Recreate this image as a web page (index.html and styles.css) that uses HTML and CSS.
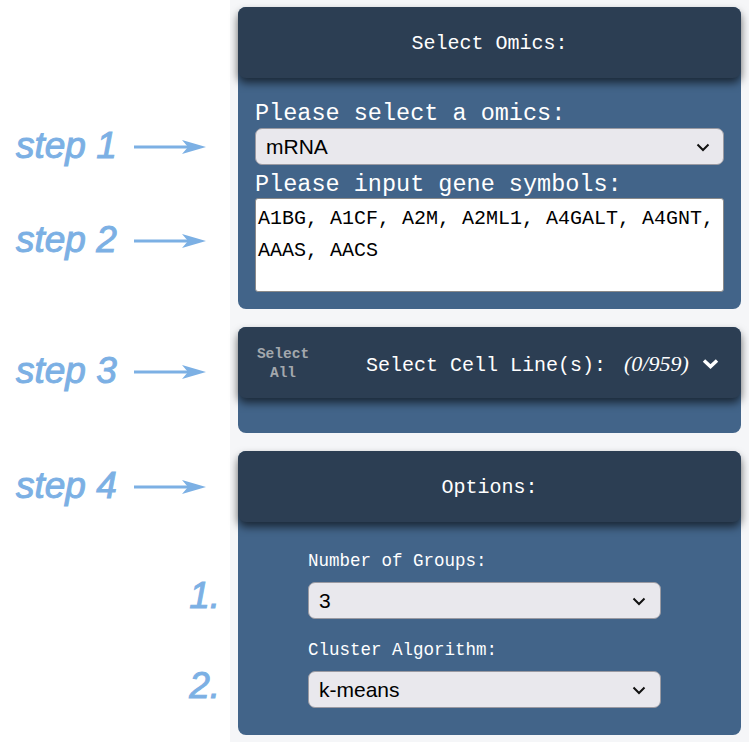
FILE: index.html
```html
<!DOCTYPE html>
<html lang="en">
<head>
    <title>Cluster - Steps</title>
    <meta charset="utf-8">
    <meta name="viewport" content="width=device-width, initial-scale=1.0">
    <link rel="stylesheet" href="styles.css">
</head>
<body>
    <div class="steps">
        <div class="step step-1">step 1<span class="arrow"><svg width="72" height="14" viewBox="0 0 72 14"><line x1="0" y1="7" x2="60" y2="7" stroke="#7cb0e4" stroke-width="3"/><path d="M48 0 L72 7 L48 14 L54 7 Z" fill="#7cb0e4"/></svg></span></div>
        <div class="step step-2">step 2<span class="arrow"><svg width="72" height="14" viewBox="0 0 72 14"><line x1="0" y1="7" x2="60" y2="7" stroke="#7cb0e4" stroke-width="3"/><path d="M48 0 L72 7 L48 14 L54 7 Z" fill="#7cb0e4"/></svg></span></div>
        <div class="step step-3">step 3<span class="arrow"><svg width="72" height="14" viewBox="0 0 72 14"><line x1="0" y1="7" x2="60" y2="7" stroke="#7cb0e4" stroke-width="3"/><path d="M48 0 L72 7 L48 14 L54 7 Z" fill="#7cb0e4"/></svg></span></div>
        <div class="step step-4">step 4<span class="arrow"><svg width="72" height="14" viewBox="0 0 72 14"><line x1="0" y1="7" x2="60" y2="7" stroke="#7cb0e4" stroke-width="3"/><path d="M48 0 L72 7 L48 14 L54 7 Z" fill="#7cb0e4"/></svg></span></div>
        <div class="step num num-1">1.</div>
        <div class="step num num-2">2.</div>
    </div>

    <div class="sidebar">
        <div class="panel">
            <div class="panel-head">Select Omics:</div>
            <div class="panel-body omics">
                <label class="field-label">Please select a omics:</label>
                <div class="select">
                    <span>mRNA</span>
                    <svg width="14" height="9" viewBox="0 0 14 9"><path d="M1.5 1.5 L7 7 L12.5 1.5" fill="none" stroke="#111" stroke-width="2"/></svg>
                </div>
                <label class="field-label">Please input gene symbols:</label>
                <textarea class="genes" spellcheck="false">A1BG, A1CF, A2M, A2ML1, A4GALT, A4GNT, AAAS, AACS</textarea>
            </div>
        </div>

        <div class="panel">
            <div class="panel-head cell-head">
                <div class="select-all">Select<br>All</div>
                <div class="cell-title">Select Cell Line(s): <em>(0/959)</em></div>
                <svg class="caret" width="17" height="11" viewBox="0 0 17 11"><path d="M2 2.5 L8.5 8.5 L15 2.5" fill="none" stroke="#fff" stroke-width="3.5"/></svg>
            </div>
            <div class="panel-body cells"></div>
        </div>

        <div class="panel">
            <div class="panel-head">Options:</div>
            <div class="panel-body options">
                <label class="opt-label">Number of Groups:</label>
                <div class="select small">
                    <span>3</span>
                    <svg width="14" height="9" viewBox="0 0 14 9"><path d="M1.5 1.5 L7 7 L12.5 1.5" fill="none" stroke="#111" stroke-width="2"/></svg>
                </div>
                <label class="opt-label second">Cluster Algorithm:</label>
                <div class="select small">
                    <span>k-means</span>
                    <svg width="14" height="9" viewBox="0 0 14 9"><path d="M1.5 1.5 L7 7 L12.5 1.5" fill="none" stroke="#111" stroke-width="2"/></svg>
                </div>
            </div>
        </div>
    </div>
</body>
</html>
```

FILE: styles.css
```css
* { margin: 0; padding: 0; box-sizing: border-box; }
body {
    display: flex; width: 749px; min-height: 742px;
    background: #fff; font-family: 'Liberation Mono', monospace;
}

/* left annotations */
.steps {
    width: 230px; display: flex; flex-direction: column;
    padding-top: 126px; flex-shrink: 0;
}
.step {
    height: 40px; display: flex; align-items: center;
    padding-left: 16px; color: #7cb0e4;
    font-family: 'Liberation Sans', Arial, sans-serif;
    font-style: italic; font-size: 37px; white-space: pre;
    -webkit-text-stroke: 1px #7cb0e4;
}
.step .arrow { display: flex; margin-left: 17px; margin-top: 2px; }
.step-2 { margin-top: 54px; }
.step-3 { margin-top: 91px; }
.step-4 { margin-top: 75px; }
.num { justify-content: flex-end; padding-right: 10px; }
.num-1 { margin-top: 70px; }
.num-2 { margin-top: 50px; }

/* right column */
.sidebar {
    flex: 1; background: #f5f6f8;
    padding: 7px 8px 7px;
    display: flex; flex-direction: column; gap: 18px;
}
.panel {
    background: #426489; border-radius: 8px;
}
.panel-head {
    height: 71px; background: #2c3e53; border-radius: 8px;
    display: flex; align-items: center; justify-content: center;
    color: #fff; font-size: 20px; padding-top: 2px;
    box-shadow: 0 5px 8px rgba(0, 0, 0, 0.6);
    position: relative;
}
.panel-body { padding: 20px 17px 17px; }

.field-label {
    display: block; color: #fff; font-size: 23.5px; line-height: 28px;
    padding-top: 2px; margin-bottom: -2px;
}
.select {
    height: 37px; margin: 2px 0 4px;
    background: #e9e8ed; border: 1px solid #9a9aa2; border-radius: 7px;
    display: flex; align-items: center; justify-content: space-between;
    padding: 0 13px 0 10px;
    font-family: 'Liberation Sans', Arial, sans-serif; font-size: 21px; color: #000;
}
.select svg { margin-top: 1px; }
.genes {
    display: block; width: 100%; height: 94px; margin-top: 1px;
    border: 1px solid #8a8a8a; border-radius: 3px; resize: none;
    padding: 4px 2px 0; outline: none;
    font-family: 'Liberation Mono', monospace; font-size: 20px; line-height: 32px;
    color: #000; background: #fff; overflow: hidden;
}

.cell-head { justify-content: flex-start; padding: 2px 20px 0 18px; }
.select-all {
    width: 54px; text-align: center; color: #a3a8ad;
    font-size: 14.5px; line-height: 19px; font-weight: bold;
}
.cell-title { margin-left: 56px; font-size: 20px; }
.cell-title em {
    font-family: 'Liberation Serif', serif; font-style: italic; font-size: 22px;
    margin-left: 6px;
}
.caret { margin-left: 13px; }
.cells { height: 35px; padding: 0; }

.options { padding: 25px 80px 27px 70px; }
.opt-label {
    display: block; color: #fff; font-size: 17.5px; line-height: 24px;
    margin-bottom: 9px; padding-top: 2px;
}
.opt-label.second { margin-top: 17px; }
.select.small { margin: 0; padding-right: 14px; }
```
